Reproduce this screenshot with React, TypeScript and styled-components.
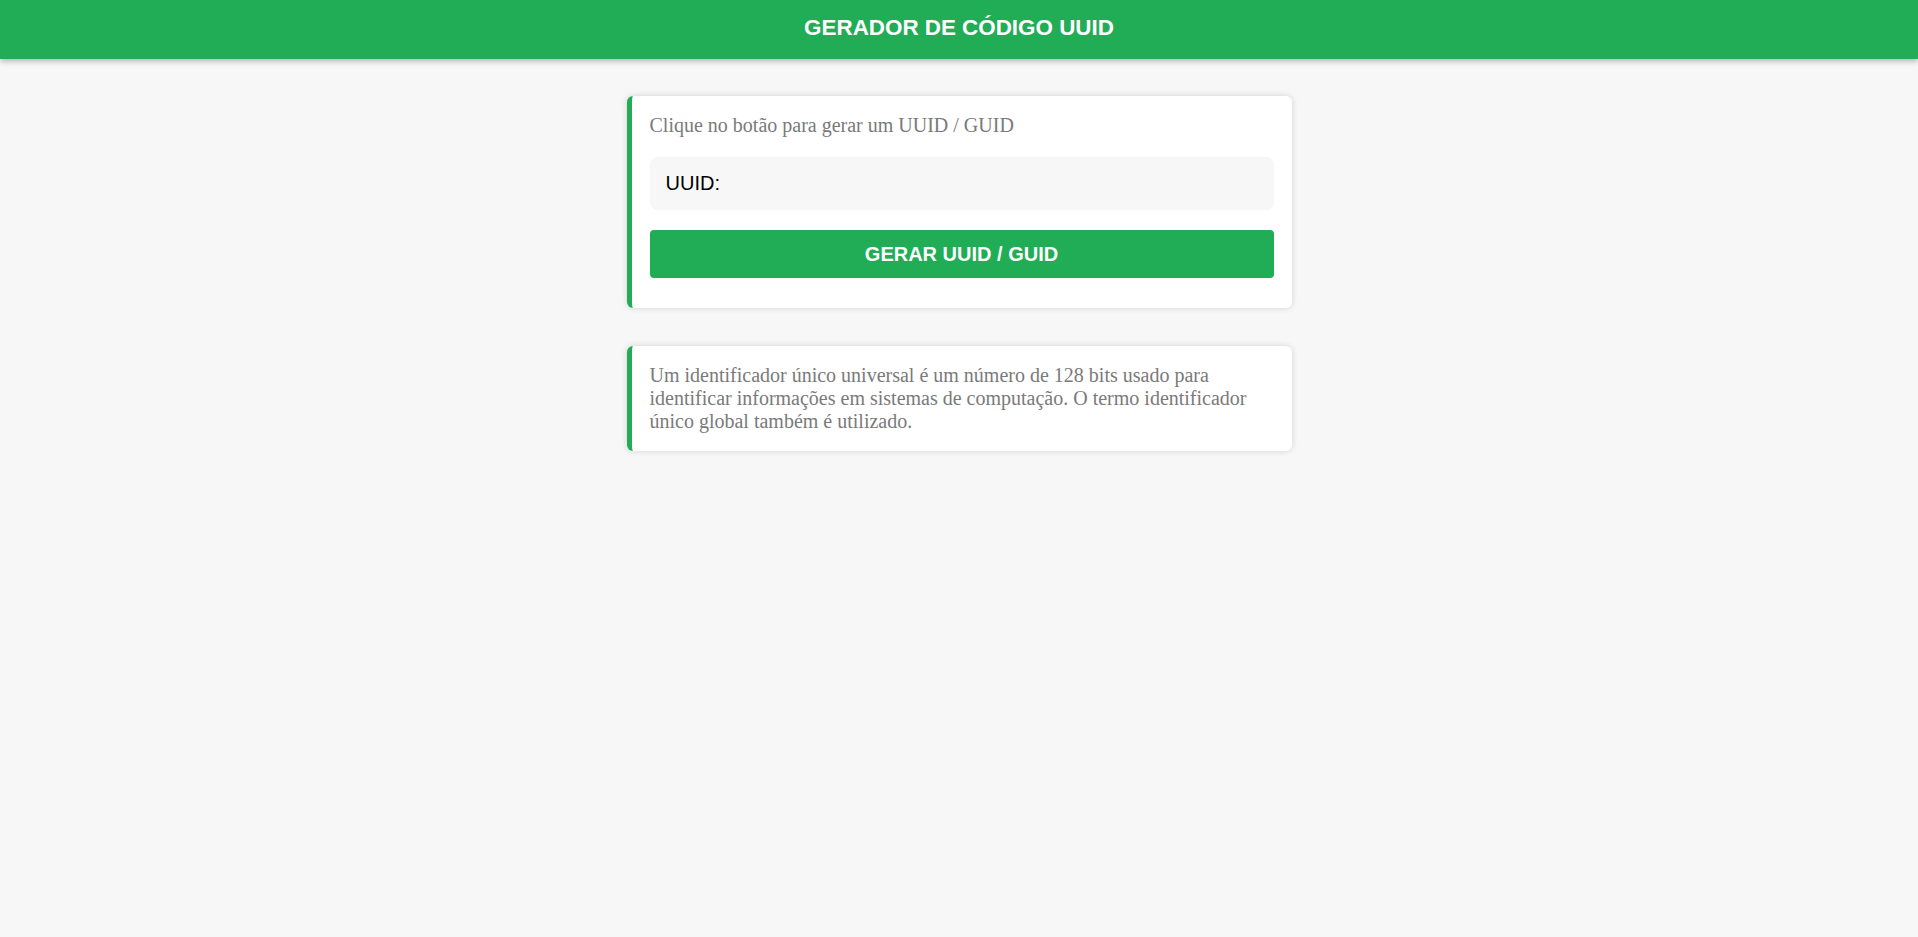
import React from "react";
import styled, { createGlobalStyle } from "styled-components";

const GREEN = "#20ad56";

const GlobalStyle = createGlobalStyle`
  html, body {
    margin: 0;
    padding: 0;
    background: #f7f7f7;
  }
  body {
    font-family: "Liberation Serif", "Times New Roman", serif;
  }
  * { box-sizing: border-box; }
`;

const Page = styled.div`
  min-height: 100vh;
  background: #f7f7f7;
  display: flex;
  flex-direction: column;
`;

const Header = styled.header`
  height: 59px;
  padding-top: 15px;
  background: ${GREEN};
  box-shadow: 0 2px 6px rgba(0, 0, 0, 0.3);
  text-align: center;
`;

const Title = styled.h1`
  margin: 0;
  font-family: "Liberation Sans", Arial, sans-serif;
  font-weight: 700;
  font-size: 22.4px;
  line-height: normal;
  color: #ffffff;
`;

const Main = styled.main`
  display: flex;
  flex-direction: column;
  align-items: center;
  gap: 38px;
  padding-top: 37px;
`;

const Card = styled.section<{ $bottom?: number }>`
  width: 665px;
  background: #ffffff;
  border-left: 5px solid ${GREEN};
  border-radius: 6px;
  box-shadow: 0 0 6px rgba(0, 0, 0, 0.15);
  padding: 18px 18px ${(p) => p.$bottom ?? 18}px 18px;
  display: flex;
  flex-direction: column;
`;

const Text = styled.p<{ $mb?: number }>`
  margin: 0 0 ${(p) => p.$mb ?? 0}px 0;
  font-family: "Liberation Serif", "Times New Roman", serif;
  font-size: 20px;
  line-height: normal;
  color: #7a7a7a;
`;

const Output = styled.div`
  background: #f7f7f7;
  border-radius: 8px;
  padding: 15px 16px;
  font-family: "Liberation Sans", Arial, sans-serif;
  font-size: 20px;
  line-height: 23px;
  color: #000000;
  margin-bottom: 20px;
`;

const Button = styled.button`
  height: 48px;
  border: none;
  border-radius: 4px;
  background: ${GREEN};
  color: #ffffff;
  font-family: "Liberation Sans", Arial, sans-serif;
  font-weight: 700;
  font-size: 20px;
  cursor: pointer;
  padding: 0;
`;

export default function App() {
  const [uuid, setUuid] = React.useState("");
  const generate = () => {
    const hex = "0123456789abcdef";
    let s = "";
    for (let i = 0; i < 36; i++) {
      if (i === 8 || i === 13 || i === 18 || i === 23) s += "-";
      else if (i === 14) s += "4";
      else s += hex[Math.floor(Math.random() * 16)];
    }
    setUuid(s);
  };
  return (
    <Page>
      <GlobalStyle />
      <Header>
        <Title>GERADOR DE CÓDIGO UUID</Title>
      </Header>
      <Main>
        <Card $bottom={30}>
          <Text $mb={20}>Clique no botão para gerar um UUID / GUID</Text>
          <Output>UUID: {uuid}</Output>
          <Button onClick={generate}>GERAR UUID / GUID</Button>
        </Card>
        <Card>
          <Text>
            Um identificador único universal é um número de 128 bits usado para
            identificar informações em sistemas de computação. O termo
            identificador único global também é utilizado.
          </Text>
        </Card>
      </Main>
    </Page>
  );
}
